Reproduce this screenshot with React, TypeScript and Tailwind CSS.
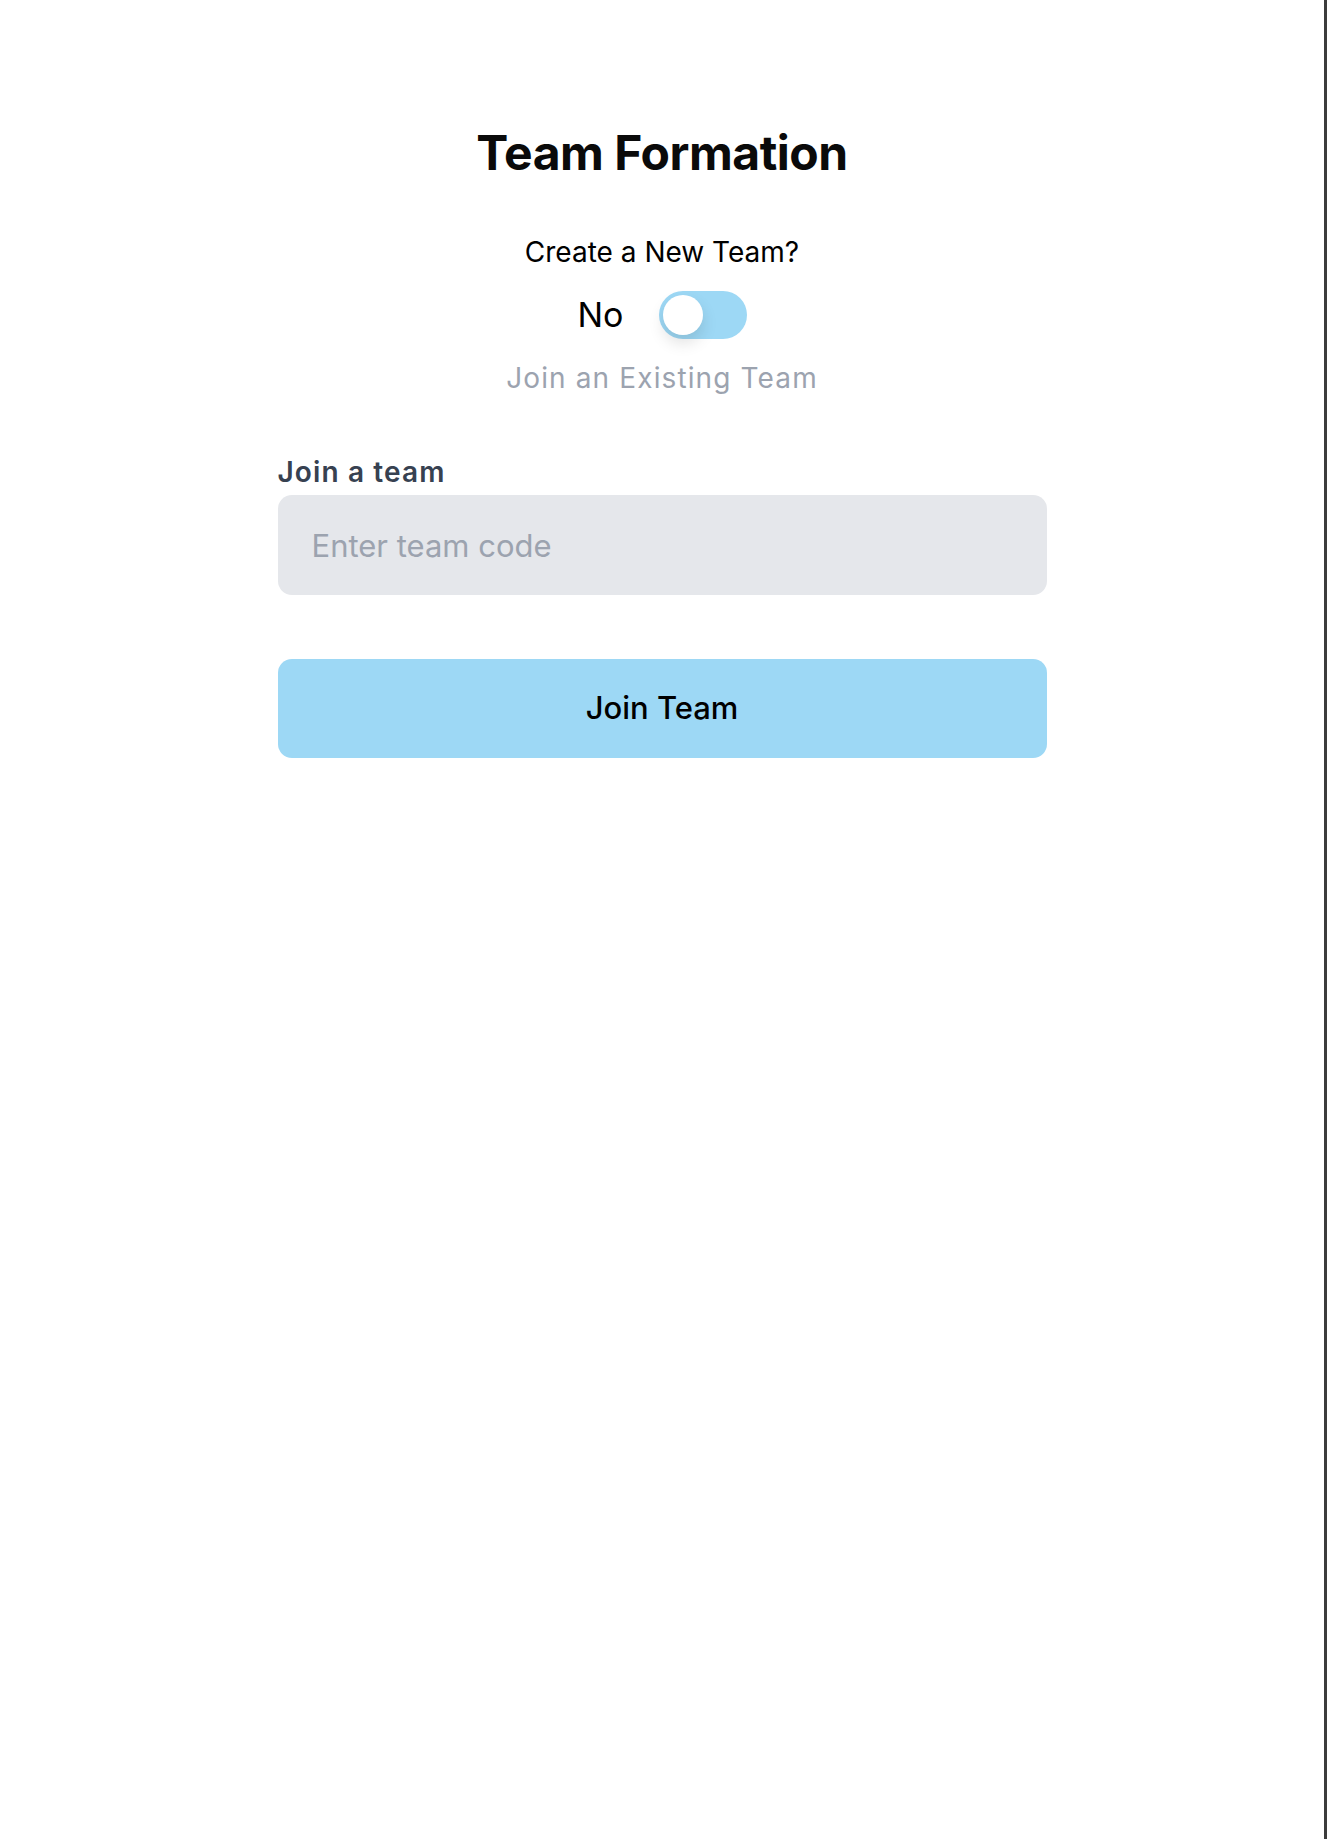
export default function App() {
  return (
    <div className="flex min-h-screen w-full bg-white font-['Inter',sans-serif]">
      <main className="flex flex-1 flex-col items-center pt-[123px]">
        <h1 className="text-[48px] font-bold leading-[60px] tracking-[-0.01em] text-[#0a0a0a]">
          Team Formation
        </h1>
        <p className="mt-[52px] text-[28px] leading-[34px] text-black">
          Create a New Team?
        </p>
        <div className="mt-[22px] flex h-[48px] items-center gap-[35px]">
          <span className="text-[34px] leading-[48px] text-black">No</span>
          <button
            type="button"
            className="flex h-[48px] w-[88px] items-center rounded-full bg-[#9dd8f5] px-[4px]"
          >
            <span className="h-[40px] w-[40px] rounded-full bg-white shadow-[0_8px_16px_rgba(0,0,0,0.12)]" />
          </button>
        </div>
        <p className="mt-[22px] text-[28px] leading-[34px] tracking-[0.04em] text-[#9ca3af]">
          Join an Existing Team
        </p>
        <form className="mt-[60px] flex w-[769px] flex-col">
          <label className="text-[28px] font-semibold leading-[34px] tracking-[0.04em] text-[#374151]">
            Join a team
          </label>
          <input
            type="text"
            placeholder="Enter team code"
            className="mt-[6px] h-[100px] w-full rounded-[14px] bg-[#e5e7eb] px-[34px] text-[31px] text-black placeholder:text-[#9ca3af] outline-none"
          />
          <button
            type="button"
            className="mt-[64px] h-[99px] w-full rounded-[14px] bg-[#9dd8f5] text-[31px] font-medium text-black"
          >
            Join Team
          </button>
        </form>
      </main>
      <div className="w-[3px] shrink-0 bg-[#3c3c3c]" />
    </div>
  );
}
